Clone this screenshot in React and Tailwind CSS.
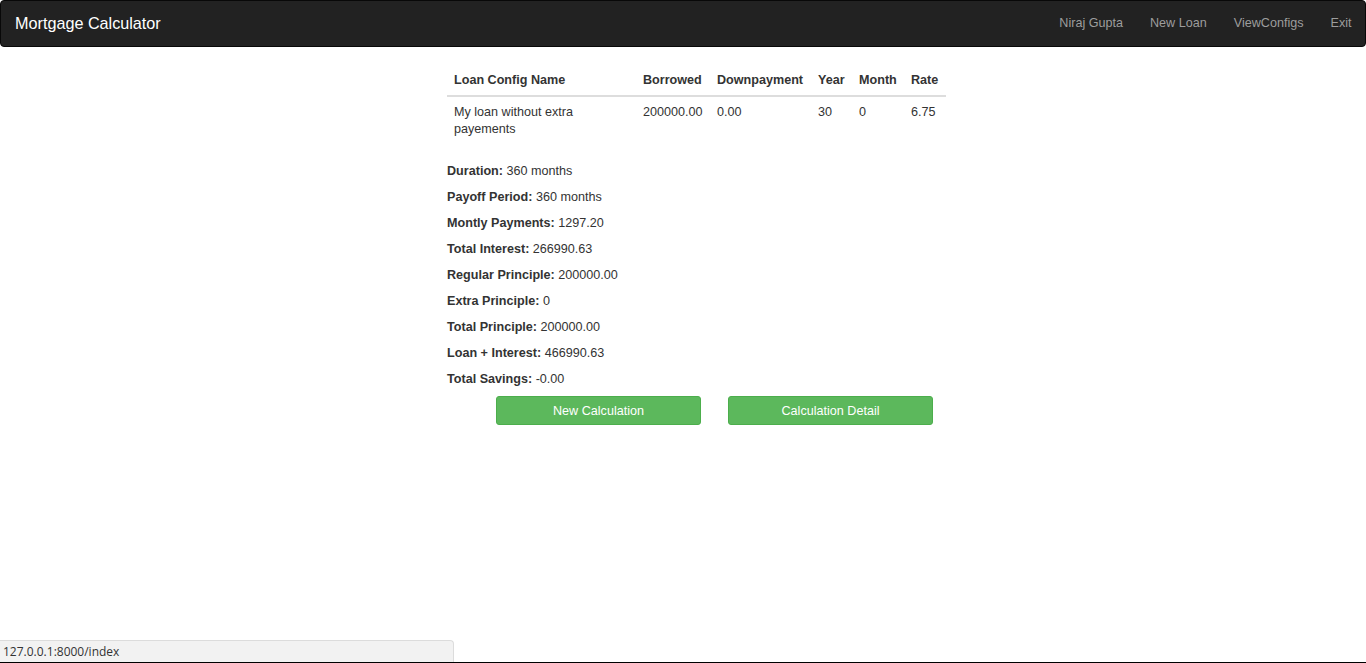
const loan = {
  name: 'My loan without extra payements',
  borrowed: '200000.00',
  downpayment: '0.00',
  year: '30',
  month: '0',
  rate: '6.75',
}

const summary = [
  ['Duration:', '360 months'],
  ['Payoff Period:', '360 months'],
  ['Montly Payments:', '1297.20'],
  ['Total Interest:', '266990.63'],
  ['Regular Principle:', '200000.00'],
  ['Extra Principle:', '0'],
  ['Total Principle:', '200000.00'],
  ['Loan + Interest:', '466990.63'],
  ['Total Savings:', '-0.00'],
]

export default function App() {
  return (
    <div className="relative min-h-[663px] bg-white text-[#333] text-[12.6px] leading-[18px] font-['Liberation_Sans',Arial,sans-serif]">
      {/* Navbar */}
      <nav className="h-[47px] pb-[2px] bg-[#222] border border-[#080808] rounded-[4px] flex items-center justify-between">
        <a className="pl-[14px] text-[16.2px] text-white">Mortgage Calculator</a>
        <ul className="flex text-[#9d9d9d] text-[12.6px]">
          <li className="px-[13.5px]">Niraj Gupta</li>
          <li className="px-[13.5px]">New Loan</li>
          <li className="px-[13.5px]">ViewConfigs</li>
          <li className="px-[13.5px]">Exit</li>
        </ul>
      </nav>

      <div className="ml-[447px] w-[499px] mt-[17px]">
        <table className="w-full table-fixed border-collapse mb-[18px]">
          <thead>
            <tr className="border-b-[2px] border-[#ddd] text-left">
              <th className="w-[189px] px-[7px] pt-[7px] pb-[6px] font-bold">Loan Config Name</th>
              <th className="w-[74px] px-[7px] pt-[7px] pb-[6px] font-bold">Borrowed</th>
              <th className="w-[101px] px-[7px] pt-[7px] pb-[6px] font-bold">Downpayment</th>
              <th className="w-[41px] px-[7px] pt-[7px] pb-[6px] font-bold">Year</th>
              <th className="w-[52px] px-[7px] pt-[7px] pb-[6px] font-bold">Month</th>
              <th className="px-[7px] pt-[7px] pb-[6px] font-bold">Rate</th>
            </tr>
          </thead>
          <tbody>
            <tr className="align-top">
              <td className="px-[7px] pt-[7px] pb-[6px] leading-[17px]">{loan.name}</td>
              <td className="px-[7px] pt-[7px] pb-[6px] leading-[17px]">{loan.borrowed}</td>
              <td className="px-[7px] pt-[7px] pb-[6px] leading-[17px]">{loan.downpayment}</td>
              <td className="px-[7px] pt-[7px] pb-[6px] leading-[17px]">{loan.year}</td>
              <td className="px-[7px] pt-[7px] pb-[6px] leading-[17px]">{loan.month}</td>
              <td className="px-[7px] pt-[7px] pb-[6px] leading-[17px]">{loan.rate}</td>
            </tr>
          </tbody>
        </table>

        {summary.map(([label, value]) => (
          <p key={label} className="mb-[8px]">
            <b>{label}</b> {value}
          </p>
        ))}

        <div className="flex gap-[27px] ml-[49px] mt-[4px]">
          <button className="w-[205px] h-[29px] bg-[#5cb85c] border border-[#4cae4c] rounded-[3px] text-white text-[12.6px]">
            New Calculation
          </button>
          <button className="w-[205px] h-[29px] bg-[#5cb85c] border border-[#4cae4c] rounded-[3px] text-white text-[12.6px]">
            Calculation Detail
          </button>
        </div>
      </div>

      {/* browser status bar */}
      <div className="absolute left-0 right-0 bottom-0 h-[1px] bg-black" />
      <div className="absolute left-0 bottom-[1px] w-[454px] h-[22px] bg-[#f2f2f2] border-t border-r border-[#dcdcdc] rounded-tr-[4px] pl-[3px] text-[12px] leading-[22px] text-[#333] font-['Open_Sans',sans-serif]">
        127.0.0.1:8000/index
      </div>
    </div>
  )
}
